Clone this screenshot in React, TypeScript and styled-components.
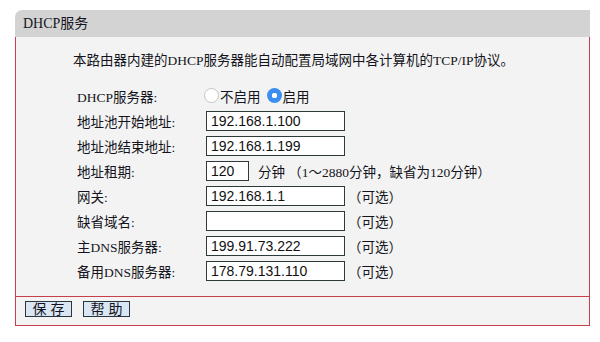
import { createGlobalStyle, styled } from 'styled-components';

const SERIF = `"Liberation Serif", "Noto Sans CJK SC", serif`;
const SANS = `"Liberation Sans", "Noto Sans CJK SC", sans-serif`;
const RED = '#c83f4c';

const GlobalStyle = createGlobalStyle`
  html, body {
    margin: 0;
    padding: 0;
    background: #ffffff;
  }
`;

interface Field {
  label: string;
  value?: string;
  optional?: boolean;
}

const ADDRESS_FIELDS: Field[] = [
  { label: '地址池开始地址:', value: '192.168.1.100' },
  { label: '地址池结束地址:', value: '192.168.1.199' },
];

const NETWORK_FIELDS: Field[] = [
  { label: '网关:', value: '192.168.1.1', optional: true },
  { label: '缺省域名:', value: '', optional: true },
  { label: '主DNS服务器:', value: '199.91.73.222', optional: true },
  { label: '备用DNS服务器:', value: '178.79.131.110', optional: true },
];

const FieldRow = ({ label, value, optional }: Field) => (
  <S.Row>
    <S.Label>{label}</S.Label>
    <S.Input defaultValue={value} />
    {optional && <S.Note>（可选）</S.Note>}
  </S.Row>
);

const App = () => (
  <>
    <GlobalStyle />
    <S.Page>
      <S.Header>DHCP服务</S.Header>
      <S.Panel>
        <S.Content>
          <S.Intro>本路由器内建的DHCP服务器能自动配置局域网中各计算机的TCP/IP协议。</S.Intro>
          <S.Form>
            <S.Row>
              <S.Label>DHCP服务器:</S.Label>
              <S.RadioLabel>
                <S.Radio type="radio" name="dhcp" />
                不启用
              </S.RadioLabel>
              <S.RadioLabel>
                <S.Radio type="radio" name="dhcp" defaultChecked />
                启用
              </S.RadioLabel>
            </S.Row>
            {ADDRESS_FIELDS.map((field) => (
              <FieldRow key={field.label} {...field} />
            ))}
            <S.Row>
              <S.Label>地址租期:</S.Label>
              <S.Input defaultValue="120" $short />
              <S.Unit>分钟 （1～2880分钟，缺省为120分钟）</S.Unit>
            </S.Row>
            {NETWORK_FIELDS.map((field) => (
              <FieldRow key={field.label} {...field} />
            ))}
          </S.Form>
        </S.Content>
        <S.Footer>
          <S.Button type="button">保 存</S.Button>
          <S.Button type="button">帮 助</S.Button>
        </S.Footer>
      </S.Panel>
    </S.Page>
  </>
);

const S = {
  Page: styled.div`
    width: 575px;
    padding: 10px 0 0 15px;
    font-family: ${SERIF};
    color: #141420;
  `,

  Header: styled.div`
    height: 27px;
    padding-left: 8px;
    line-height: 27px;
    font-size: 14px;
    background: #d3d3d3;
    border-top-left-radius: 7px;
  `,

  Panel: styled.div`
    background: #f3f3f3;
    border: 1px solid ${RED};
    border-top: none;
  `,

  Content: styled.div`
    padding: 14px 0 13px 57px;
  `,

  Intro: styled.p`
    margin: 0 0 12px;
    font-size: 13.5px;
    line-height: 20px;
  `,

  Form: styled.div`
    display: flex;
    flex-direction: column;
    padding-left: 4px;
  `,

  Row: styled.div`
    display: flex;
    align-items: center;
    height: 25px;
    font-size: 13.5px;
  `,

  Label: styled.span`
    width: 129px;
    flex-shrink: 0;
  `,

  Input: styled.input<{ $short?: boolean }>`
    box-sizing: border-box;
    width: ${({ $short }) => ($short ? '43px' : '139px')};
    height: 20px;
    padding: 0 4px;
    border: 1px solid #2d3a3a;
    border-radius: 0;
    background: #ffffff;
    font-family: ${SANS};
    font-size: 14px;
    color: #111111;
    outline: none;
  `,

  Unit: styled.span`
    margin-left: 9px;
  `,

  Note: styled.span`
    margin-left: 3px;
  `,

  RadioLabel: styled.label`
    display: inline-flex;
    align-items: center;
    margin-left: -2px;
    margin-right: 8px;
  `,

  Radio: styled.input`
    appearance: none;
    box-sizing: border-box;
    width: 15px;
    height: 15px;
    margin: 0 1px 0 0;
    border: 1px solid #c4c4c4;
    border-radius: 50%;
    background: #ffffff;

    &:checked {
      border: none;
      background: radial-gradient(circle, #ffffff 0 2.5px, #3a8ef0 3px);
    }
  `,

  Footer: styled.div`
    display: flex;
    gap: 11px;
    height: 29px;
    padding: 4px 0 0 9px;
    box-sizing: border-box;
    border-top: 1px solid ${RED};
  `,

  Button: styled.button`
    box-sizing: border-box;
    width: 47px;
    height: 16px;
    padding: 0;
    border: 1px solid #2b3540;
    border-radius: 0;
    background: #d9e6f4;
    font-family: ${SANS};
    font-size: 14px;
    line-height: 14px;
    color: #141420;
  `,
};

export default App;
